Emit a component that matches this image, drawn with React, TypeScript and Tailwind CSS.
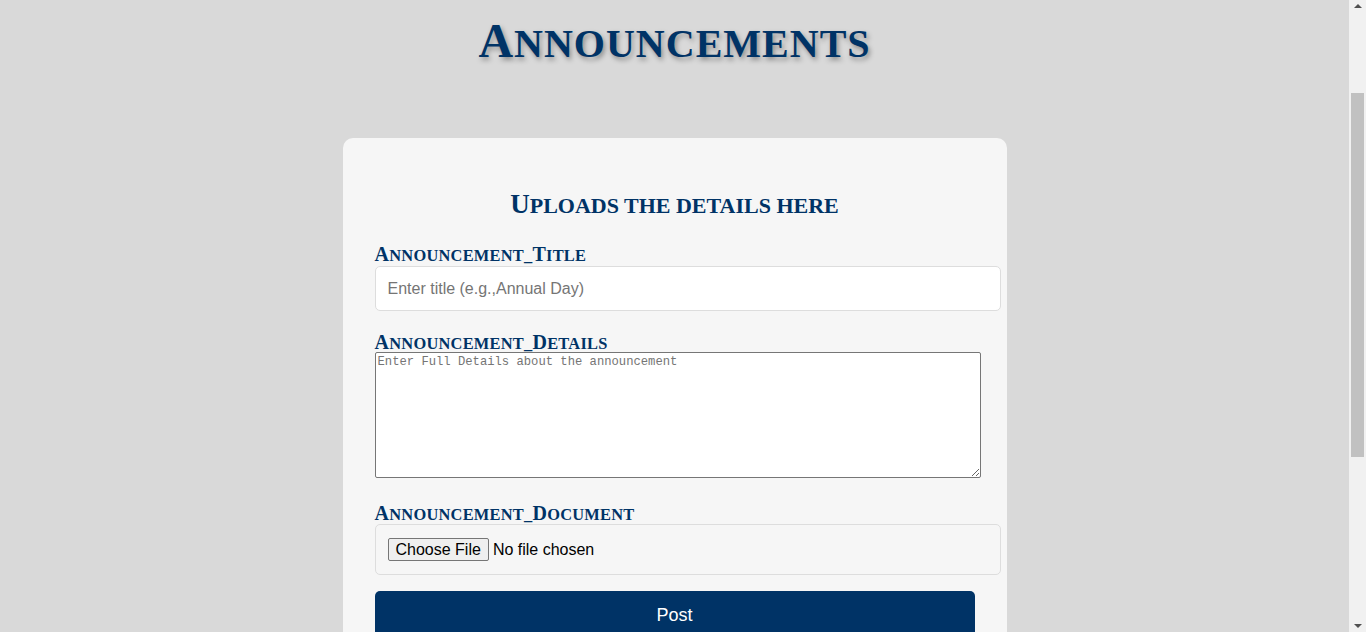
import React from "react";

const serif = "font-['Liberation_Serif',serif]";

// capitals stay full size, the rest is drawn as smaller capitals
const SmallCaps = ({ text, small }: { text: string; small: string }) => {
  const runs = text.match(/[A-Z]+|[^A-Z]+/g) ?? [];
  return (
    <>
      {runs.map((r, i) =>
        /[A-Z]/.test(r[0]) ? (
          <React.Fragment key={i}>{r}</React.Fragment>
        ) : (
          <span key={i} className={`uppercase ${small}`}>
            {r}
          </span>
        )
      )}
    </>
  );
};

const Label = ({ text, htmlFor }: { text: string; htmlFor: string }) => (
  <label
    htmlFor={htmlFor}
    className={`block h-[19px] ${serif} font-bold tracking-[0.25px] text-[#003366] text-[20px] leading-[20px]`}
  >
    <SmallCaps text={text} small="text-[16.4px]" />
  </label>
);

const Scrollbar = () => (
  <div className="sticky top-0 flex h-[632px] w-[17px] shrink-0 flex-col items-center bg-[#f1f1f1]">
    <div className="mt-[4px] h-0 w-0 border-x-[4px] border-b-[4px] border-x-transparent border-b-[#505050]" />
    <div className="mt-[85px] h-[364px] w-[13px] bg-[#c1c1c1]" />
    <div className="mt-auto mb-[4px] h-0 w-0 border-x-[4px] border-t-[4px] border-x-transparent border-t-[#505050]" />
  </div>
);

export default function App() {
  return (
    <div className="flex items-start bg-[#d9d9d9] font-['Liberation_Sans',Arial,sans-serif]">
      <div className="min-h-[1038px] flex-1 pt-[17px] pb-[40px]">
        <h1
          className={`${serif} font-bold text-center tracking-[1px] text-[#003366] text-[48px] leading-none [text-shadow:2px_3px_5px_rgba(0,0,0,0.35)]`}
        >
          <SmallCaps text="Announcements" small="text-[40px]" />
        </h1>

        <div className="mx-auto mt-[73px] w-[664px] rounded-[10px] bg-[#f6f6f6] px-[32px] pt-[50px] pb-[32px]">
          <h2 className={`${serif} font-bold text-center text-[#003366] text-[27px] leading-[32px]`}>
            <SmallCaps text="Uploads the details here" small="text-[22px]" />
          </h2>

          <form className="mt-[22px]">
            <Label htmlFor="title" text="Announcement_Title" />
            <input
              id="title"
              type="text"
              placeholder="Enter title (e.g.,Annual Day)"
              className="mt-[3px] box-content block w-full h-[19px] rounded-[5px] border border-[#dddddd] bg-white px-[12px] py-[12px] text-[16px] text-black placeholder:text-[#757575] outline-none"
            />

            <div className="mt-[21px]">
              <Label htmlFor="details" text="Announcement_Details" />
            </div>
            <textarea
              id="details"
              placeholder="Enter Full Details about the announcement"
              className="mt-[1px] box-content block w-full h-[120px] rounded-[2px] border border-[#767676] bg-white p-[2px] font-['Liberation_Mono',monospace] text-[12.2px] leading-[15px] text-black placeholder:text-[#757575] outline-none"
            />

            <div className="mt-[25px]">
              <Label htmlFor="doc" text="Announcement_Document" />
            </div>
            <div className="mt-[2px] box-content w-full rounded-[5px] border border-[#dddddd] px-[12px] py-[13px]">
              <input
                id="doc"
                type="file"
                className="block text-[16px] leading-[19px] text-black file:mr-[4px] file:rounded-[2px] file:border file:border-[#767676] file:bg-[#efefef] file:px-[7px] file:py-[1px] file:text-black"
              />
            </div>

            <button
              type="button"
              className="mt-[16px] block w-full h-[48px] rounded-[5px] bg-[#003366] text-white text-[18px]"
            >
              Post
            </button>
          </form>
        </div>
      </div>
      <Scrollbar />
    </div>
  );
}
